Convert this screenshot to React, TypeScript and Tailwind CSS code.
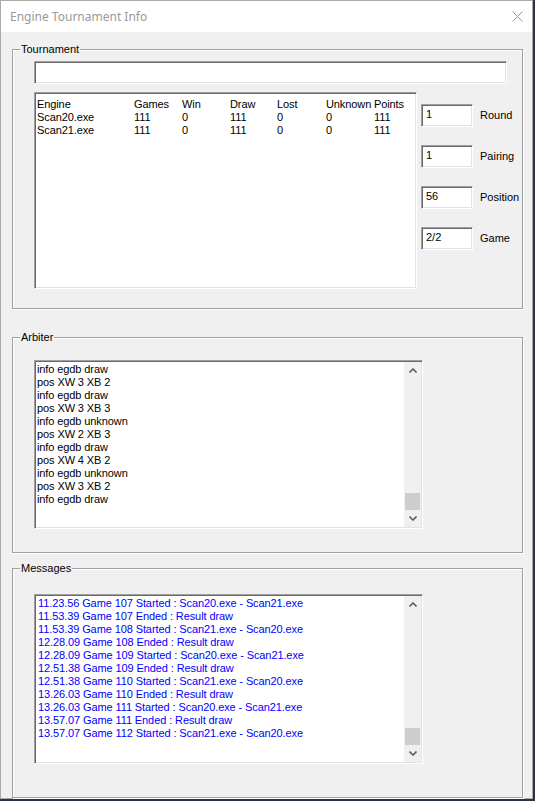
import React from "react";

const font = { fontFamily: '"Liberation Sans", Arial, sans-serif' };

const arbiterLines = [
  "info egdb draw",
  "pos XW 3 XB 2",
  "info egdb draw",
  "pos XW 3 XB 3",
  "info egdb unknown",
  "pos XW 2 XB 3",
  "info egdb draw",
  "pos XW 4 XB 2",
  "info egdb unknown",
  "pos XW 3 XB 2",
  "info egdb draw",
];

const messageLines = [
  "11.23.56 Game 107 Started : Scan20.exe - Scan21.exe",
  "11.53.39 Game 107 Ended : Result draw",
  "11.53.39 Game 108 Started : Scan21.exe - Scan20.exe",
  "12.28.09 Game 108 Ended : Result draw",
  "12.28.09 Game 109 Started : Scan20.exe - Scan21.exe",
  "12.51.38 Game 109 Ended : Result draw",
  "12.51.38 Game 110 Started : Scan21.exe - Scan20.exe",
  "13.26.03 Game 110 Ended : Result draw",
  "13.26.03 Game 111 Started : Scan20.exe - Scan21.exe",
  "13.57.07 Game 111 Ended : Result draw",
  "13.57.07 Game 112 Started : Scan21.exe - Scan20.exe",
];

const engines = [
  ["Engine", "Games", "Win", "Draw", "Lost", "Unknown", "Points"],
  ["Scan20.exe", "111", "0", "111", "0", "0", "111"],
  ["Scan21.exe", "111", "0", "111", "0", "0", "111"],
];

const sideFields = [
  { value: "1", label: "Round" },
  { value: "1", label: "Pairing" },
  { value: "56", label: "Position" },
  { value: "2/2", label: "Game" },
];

// sunken client edge used by edits and list boxes
const sunken =
  "border border-t-[#a0a0a0] border-l-[#a0a0a0] border-r-white border-b-white shadow-[inset_1px_1px_0_#696969,inset_-1px_-1px_0_#e3e3e3] bg-white";

function Chevron({ up }: { up?: boolean }) {
  return (
    <svg width="8" height="5" viewBox="0 0 8 5">
      <path
        d={up ? "M0.5 4.5 L4 1 L7.5 4.5" : "M0.5 0.5 L4 4 L7.5 0.5"}
        fill="none"
        stroke="#606060"
        strokeWidth="1.6"
      />
    </svg>
  );
}

function ScrollBar() {
  return (
    <div className="w-[17px] flex flex-col bg-[#f0f0f0] my-[1px] mr-[1px]">
      <div className="h-[17px] flex items-center justify-center">
        <Chevron up />
      </div>
      <div className="flex-1" />
      <div className="h-[17px] mx-[1px] bg-[#cdcdcd]" />
      <div className="h-[17px] flex items-center justify-center">
        <Chevron />
      </div>
    </div>
  );
}

function GroupBox({
  title,
  className,
  children,
}: {
  title: string;
  className: string;
  children: React.ReactNode;
}) {
  return (
    <div
      className={`ml-[11px] w-[511px] border border-[#a0a0a0] shadow-[1px_1px_0_#ffffff,inset_1px_1px_0_#ffffff] ${className}`}
    >
      <div className="-mt-[7px] ml-[7px] w-fit px-[1px] bg-[#f0f0f0] text-[11px] leading-[13px] text-black">
        {title}
      </div>
      <div className="pl-[21px]">{children}</div>
    </div>
  );
}

export default function App() {
  return (
    <div className="min-h-screen bg-[#2b3441]" style={font}>
      <div className="w-[533px] h-[799px] bg-[#f0f0f0] border border-[#aaaaaa] flex flex-col">
        {/* title bar */}
        <div className="h-[31px] bg-white flex items-center justify-between pl-[9px] pr-[8px]">
          <span
            className="text-[12px] text-[#999999]"
            style={{ fontFamily: '"Noto Sans", "Open Sans", sans-serif' }}
          >
            Engine Tournament Info
          </span>
          <svg width="11" height="11" viewBox="0 0 11 11" className="mr-[1px]">
            <path d="M0.5 0.5 L10.5 10.5 M10.5 0.5 L0.5 10.5" stroke="#999999" strokeWidth="1" />
          </svg>
        </div>

        {/* Tournament */}
        <GroupBox title="Tournament" className="mt-[17px] h-[260px]">
          <div className={`${sunken} mt-[5px] w-[473px] h-[23px]`} />
          <div className="flex mt-[8px]">
            <div className={`${sunken} w-[383px] h-[197px] pt-[5px] pl-[2px]`}>
              {engines.map((row, i) => (
                <div
                  key={i}
                  className="grid grid-cols-[97px_48px_48px_47px_49px_48px_auto] text-[11px] leading-[13px] text-black whitespace-nowrap tracking-[-0.1px]"
                >
                  {row.map((c, j) => (
                    <span key={j}>{c}</span>
                  ))}
                </div>
              ))}
            </div>
            <div className="ml-[4px] mt-[12px] flex flex-col gap-[18px]">
              {sideFields.map((f) => (
                <div key={f.label} className="flex items-center">
                  <div className={`${sunken} w-[52px] h-[23px] pl-[4px] pt-[3px] text-[11px] leading-[13px] text-black`}>
                    {f.value}
                  </div>
                  <span className="ml-[7px] text-[11px] leading-[13px] text-black">{f.label}</span>
                </div>
              ))}
            </div>
          </div>
        </GroupBox>

        {/* Arbiter */}
        <GroupBox title="Arbiter" className="mt-[28px] h-[216px]">
          <div className={`${sunken} mt-[16px] w-[389px] h-[169px] flex`}>
            <div className="flex-1 pl-[2px] pt-[2px] overflow-hidden">
              {arbiterLines.map((l, i) => (
                <div key={i} className="text-[11px] leading-[13px] text-black whitespace-nowrap tracking-[-0.1px]">
                  {l}
                </div>
              ))}
            </div>
            <ScrollBar />
          </div>
        </GroupBox>

        {/* Messages */}
        <GroupBox title="Messages" className="mt-[15px] h-[230px]">
          <div className={`${sunken} mt-[19px] w-[389px] h-[170px] flex`}>
            <div className="flex-1 pl-[3px] pt-[2px] overflow-hidden">
              {messageLines.map((l, i) => (
                <div key={i} className="text-[11px] leading-[13px] text-[#0000ff] whitespace-nowrap tracking-[-0.1px]">
                  {l}
                </div>
              ))}
            </div>
            <ScrollBar />
          </div>
        </GroupBox>
      </div>
    </div>
  );
}
